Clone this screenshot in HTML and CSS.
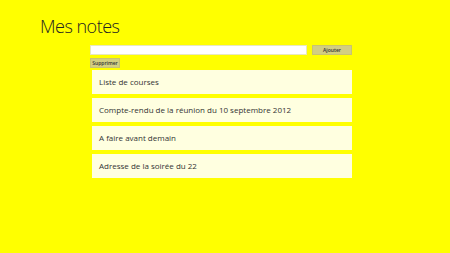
FILE: index.html
```html
<!DOCTYPE html>
<html lang="fr">
<head>
  <meta charset="UTF-8">
  <title>Mes notes</title>
  <link rel="stylesheet" href="styles.css">
</head>
<body>
  <h1 class="title">Mes notes</h1>
  <div class="content">
    <div class="add-row">
      <input type="text" class="note-input">
      <button class="btn btn-add">Ajouter</button>
    </div>
    <button class="btn btn-delete">Supprimer</button>
    <ul class="notes">
      <li class="note">Liste de courses</li>
      <li class="note">Compte-rendu de la réunion du 10 septembre 2012</li>
      <li class="note">A faire avant demain</li>
      <li class="note">Adresse de la soirée du 22</li>
    </ul>
  </div>
</body>
</html>
```

FILE: styles.css
```css
body {
  margin: 0;
  background: #ffff00;
  font-family: "Open Sans", sans-serif;
  color: #333;
  height: 253px;
}
.title {
  margin: 0;
  padding: 13px 0 0 40px;
  font-size: 18px;
  font-weight: 300;
  letter-spacing: -0.5px;
  line-height: 26px;
  color: #222;
}
.content {
  margin: 6px 0 0 90px;
  width: 262px;
}
.add-row {
  display: flex;
  gap: 5px;
  height: 10px;
}
.note-input {
  flex: 1;
  margin: 0;
  padding: 0;
  border: 1px solid #e8e8c0;
  background: #fff;
  height: 10px;
  box-sizing: border-box;
}
.btn {
  margin: 0;
  padding: 0;
  border: 1px solid #c8c470;
  background: #d2ce82;
  font-family: "Open Sans", sans-serif;
  font-size: 5px;
  font-weight: 600;
  color: #333;
  height: 10px;
  box-sizing: border-box;
}
.btn-add {
  width: 40px;
}
.btn-delete {
  display: block;
  width: 30px;
  margin-top: 3px;
}
.notes {
  list-style: none;
  margin: 2px 0 0 2px;
  padding: 0;
  display: flex;
  flex-direction: column;
  gap: 4px;
}
.note {
  background: #ffffe0;
  height: 24px;
  line-height: 24px;
  padding-left: 7px;
  font-size: 8px;
  color: #333;
}
```
